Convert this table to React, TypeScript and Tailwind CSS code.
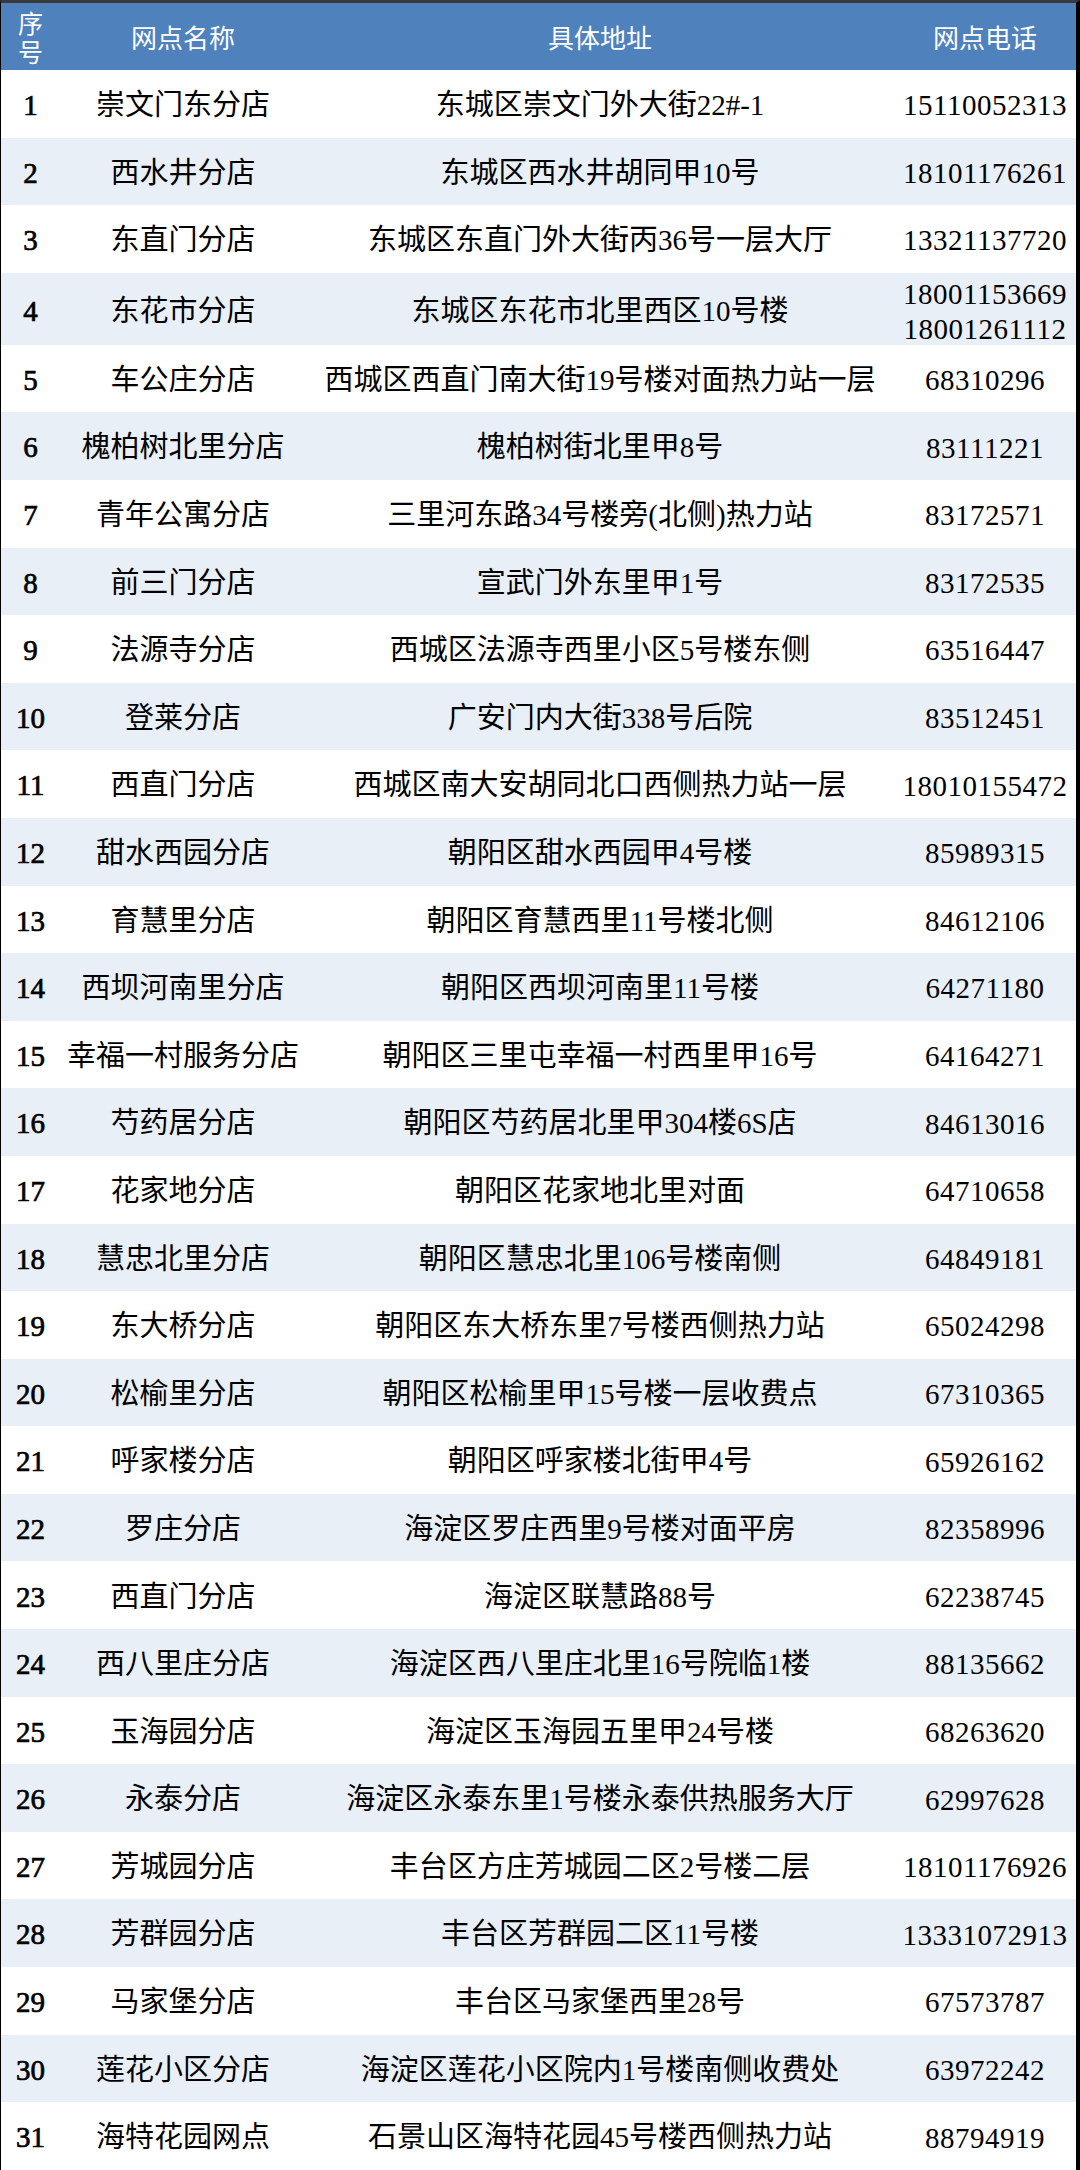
type Row = { no: number; name: string; addr: string; tel: string[] }

const rows: Row[] = [
  { no: 1, name: '崇文门东分店', addr: '东城区崇文门外大街22#-1', tel: ['15110052313'] },
  { no: 2, name: '西水井分店', addr: '东城区西水井胡同甲10号', tel: ['18101176261'] },
  { no: 3, name: '东直门分店', addr: '东城区东直门外大街丙36号一层大厅', tel: ['13321137720'] },
  { no: 4, name: '东花市分店', addr: '东城区东花市北里西区10号楼', tel: ['18001153669', '18001261112'] },
  { no: 5, name: '车公庄分店', addr: '西城区西直门南大街19号楼对面热力站一层', tel: ['68310296'] },
  { no: 6, name: '槐柏树北里分店', addr: '槐柏树街北里甲8号', tel: ['83111221'] },
  { no: 7, name: '青年公寓分店', addr: '三里河东路34号楼旁(北侧)热力站', tel: ['83172571'] },
  { no: 8, name: '前三门分店', addr: '宣武门外东里甲1号', tel: ['83172535'] },
  { no: 9, name: '法源寺分店', addr: '西城区法源寺西里小区5号楼东侧', tel: ['63516447'] },
  { no: 10, name: '登莱分店', addr: '广安门内大街338号后院', tel: ['83512451'] },
  { no: 11, name: '西直门分店', addr: '西城区南大安胡同北口西侧热力站一层', tel: ['18010155472'] },
  { no: 12, name: '甜水西园分店', addr: '朝阳区甜水西园甲4号楼', tel: ['85989315'] },
  { no: 13, name: '育慧里分店', addr: '朝阳区育慧西里11号楼北侧', tel: ['84612106'] },
  { no: 14, name: '西坝河南里分店', addr: '朝阳区西坝河南里11号楼', tel: ['64271180'] },
  { no: 15, name: '幸福一村服务分店', addr: '朝阳区三里屯幸福一村西里甲16号', tel: ['64164271'] },
  { no: 16, name: '芍药居分店', addr: '朝阳区芍药居北里甲304楼6S店', tel: ['84613016'] },
  { no: 17, name: '花家地分店', addr: '朝阳区花家地北里对面', tel: ['64710658'] },
  { no: 18, name: '慧忠北里分店', addr: '朝阳区慧忠北里106号楼南侧', tel: ['64849181'] },
  { no: 19, name: '东大桥分店', addr: '朝阳区东大桥东里7号楼西侧热力站', tel: ['65024298'] },
  { no: 20, name: '松榆里分店', addr: '朝阳区松榆里甲15号楼一层收费点', tel: ['67310365'] },
  { no: 21, name: '呼家楼分店', addr: '朝阳区呼家楼北街甲4号', tel: ['65926162'] },
  { no: 22, name: '罗庄分店', addr: '海淀区罗庄西里9号楼对面平房', tel: ['82358996'] },
  { no: 23, name: '西直门分店', addr: '海淀区联慧路88号', tel: ['62238745'] },
  { no: 24, name: '西八里庄分店', addr: '海淀区西八里庄北里16号院临1楼', tel: ['88135662'] },
  { no: 25, name: '玉海园分店', addr: '海淀区玉海园五里甲24号楼', tel: ['68263620'] },
  { no: 26, name: '永泰分店', addr: '海淀区永泰东里1号楼永泰供热服务大厅', tel: ['62997628'] },
  { no: 27, name: '芳城园分店', addr: '丰台区方庄芳城园二区2号楼二层', tel: ['18101176926'] },
  { no: 28, name: '芳群园分店', addr: '丰台区芳群园二区11号楼', tel: ['13331072913'] },
  { no: 29, name: '马家堡分店', addr: '丰台区马家堡西里28号', tel: ['67573787'] },
  { no: 30, name: '莲花小区分店', addr: '海淀区莲花小区院内1号楼南侧收费处', tel: ['63972242'] },
  { no: 31, name: '海特花园网点', addr: '石景山区海特花园45号楼西侧热力站', tel: ['88794919'] },
]

export default function App() {
  return (
    <div className="w-[1080px] bg-white font-['Liberation_Serif','Noto_Sans_CJK_SC',serif] text-[29px] text-black">
      <div className="border-t-[3px] border-l border-r-4 border-b-[3px] border-t-[#3a3a3a] border-l-black border-r-black border-b-black">
        {/* header */}
        <div className="grid h-[67px] grid-cols-[59px_246px_588px_1fr] items-center bg-[#4f81bd] text-[26px] text-white font-['Noto_Sans_CJK_SC',sans-serif]">
          <div className="flex flex-col items-center text-[25px] leading-[29px]">
            <span className="block h-[29px]">序</span>
            <span className="block h-[29px]">号</span>
          </div>
          <div className="text-center">网点名称</div>
          <div className="text-center">具体地址</div>
          <div className="text-center">网点电话</div>
        </div>

        {rows.map((r, i) => (
          <div
            key={r.no}
            className={`grid grid-cols-[59px_246px_588px_1fr] items-center pt-1 ${
              r.tel.length > 1 ? 'h-[72px]' : 'h-[67.6px]'
            } ${i % 2 === 1 ? 'bg-[#e9eff7]' : 'bg-white'}`}
          >
            <div className="text-center [-webkit-text-stroke:0.7px_black]">{r.no}</div>
            <div className="whitespace-nowrap text-center">{r.name}</div>
            <div className="whitespace-nowrap text-center">{r.addr}</div>
            <div className="flex flex-col items-center leading-[35px] tracking-[0.5px]">
              {r.tel.map((t) => (
                <span key={t}>{t}</span>
              ))}
            </div>
          </div>
        ))}
      </div>
    </div>
  )
}
